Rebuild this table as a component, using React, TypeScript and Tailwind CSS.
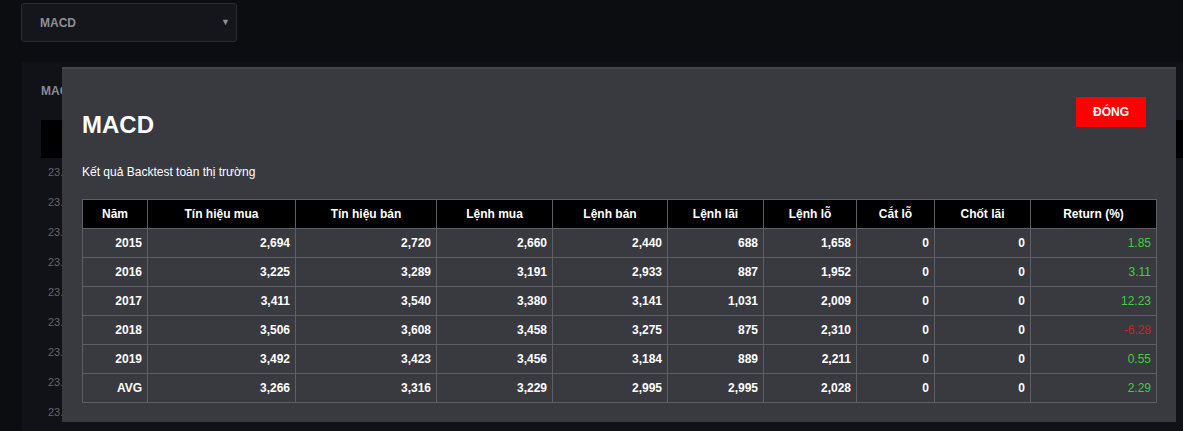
import React from "react";

type Row = {
  year: string;
  buySignal: string;
  sellSignal: string;
  buyOrders: string;
  sellOrders: string;
  winOrders: string;
  lossOrders: string;
  stopLoss: string;
  takeProfit: string;
  ret: number;
};

const rows: Row[] = [
  { year: "2015", buySignal: "2,694", sellSignal: "2,720", buyOrders: "2,660", sellOrders: "2,440", winOrders: "688", lossOrders: "1,658", stopLoss: "0", takeProfit: "0", ret: 1.85 },
  { year: "2016", buySignal: "3,225", sellSignal: "3,289", buyOrders: "3,191", sellOrders: "2,933", winOrders: "887", lossOrders: "1,952", stopLoss: "0", takeProfit: "0", ret: 3.11 },
  { year: "2017", buySignal: "3,411", sellSignal: "3,540", buyOrders: "3,380", sellOrders: "3,141", winOrders: "1,031", lossOrders: "2,009", stopLoss: "0", takeProfit: "0", ret: 12.23 },
  { year: "2018", buySignal: "3,506", sellSignal: "3,608", buyOrders: "3,458", sellOrders: "3,275", winOrders: "875", lossOrders: "2,310", stopLoss: "0", takeProfit: "0", ret: -6.28 },
  { year: "2019", buySignal: "3,492", sellSignal: "3,423", buyOrders: "3,456", sellOrders: "3,184", winOrders: "889", lossOrders: "2,211", stopLoss: "0", takeProfit: "0", ret: 0.55 },
  { year: "AVG", buySignal: "3,266", sellSignal: "3,316", buyOrders: "3,229", sellOrders: "2,995", winOrders: "2,995", lossOrders: "2,028", stopLoss: "0", takeProfit: "0", ret: 2.29 },
];

const headers = [
  { label: "Năm", w: "w-[65px]" },
  { label: "Tín hiệu mua", w: "w-[148px]" },
  { label: "Tín hiệu bán", w: "w-[141px]" },
  { label: "Lệnh mua", w: "w-[116px]" },
  { label: "Lệnh bán", w: "w-[115px]" },
  { label: "Lệnh lãi", w: "w-[96px]" },
  { label: "Lệnh lỗ", w: "w-[93px]" },
  { label: "Cắt lỗ", w: "w-[78px]" },
  { label: "Chốt lãi", w: "w-[96px]" },
  { label: "Return (%)", w: "w-[126px]" },
];

const cell = "border border-[#5e5f66] h-[29px] px-[5px] text-right";

export default function App() {
  return (
    <div className="relative w-[1183px] h-[431px] overflow-hidden bg-[#0c0d11] font-['Liberation_Sans',Arial,sans-serif]">
      {/* Bộ chọn chỉ báo */}
      <div className="pl-[21px] pt-[3px]">
        <div className="flex items-center justify-between w-[216px] h-[39px] bg-[#15161b] border border-[#2a2b31] rounded-[3px] pl-[18px] pr-[6px]">
          <span className="text-[12px] font-bold text-[#8e8f94]">MACD</span>
          <span className="text-[9px] text-[#8e8f94]">▼</span>
        </div>
      </div>

      {/* Panel phía sau */}
      <div className="ml-[22px] mt-[20px] h-[400px] bg-[#111217] pl-[19px]">
        <div className="pt-[20px] text-[12px] font-bold text-[#8a8b90]">MACD</div>
        <div className="mt-[20px] h-[38px] bg-black" />
        <div className="flex flex-col pl-[7px] pt-[7px]">
          {Array.from({ length: 9 }).map((_, i) => (
            <div key={i} className="h-[30px] text-[11px] leading-[14px] text-[#64656a]">
              23.45
            </div>
          ))}
        </div>
      </div>

      {/* Modal */}
      <div className="absolute left-[62px] top-[67px] w-[1114px] h-[355px] bg-[#393940] border-t-2 border-[#45464d] px-5 pt-[28px]">
        <div className="flex items-start justify-between">
          <h2 className="mt-[14px] text-[24px] leading-[28px] font-bold text-white">MACD</h2>
          <button className="mr-[10px] w-[70px] h-[30px] bg-[#ff0000] text-white text-[12px] font-bold">
            ĐÓNG
          </button>
        </div>
        <p className="mt-[25px] text-[12px] leading-[16px] text-white">Kết quả Backtest toàn thị trường</p>

        <table className="mt-[19px] border-collapse table-fixed w-[1074px] text-[12px] font-bold text-white">
          <thead>
            <tr className="bg-black">
              {headers.map((h) => (
                <th key={h.label} className={`${h.w} border border-[#5e5f66] h-[29px] text-center font-bold`}>
                  {h.label}
                </th>
              ))}
            </tr>
          </thead>
          <tbody>
            {rows.map((r) => (
              <tr key={r.year}>
                <td className={cell}>{r.year}</td>
                <td className={cell}>{r.buySignal}</td>
                <td className={cell}>{r.sellSignal}</td>
                <td className={cell}>{r.buyOrders}</td>
                <td className={cell}>{r.sellOrders}</td>
                <td className={cell}>{r.winOrders}</td>
                <td className={cell}>{r.lossOrders}</td>
                <td className={cell}>{r.stopLoss}</td>
                <td className={cell}>{r.takeProfit}</td>
                <td className={`${cell} font-normal ${r.ret < 0 ? "text-[#d42028]" : "text-[#3fcf3f]"}`}>
                  {r.ret.toFixed(2)}
                </td>
              </tr>
            ))}
          </tbody>
        </table>
      </div>
    </div>
  );
}
